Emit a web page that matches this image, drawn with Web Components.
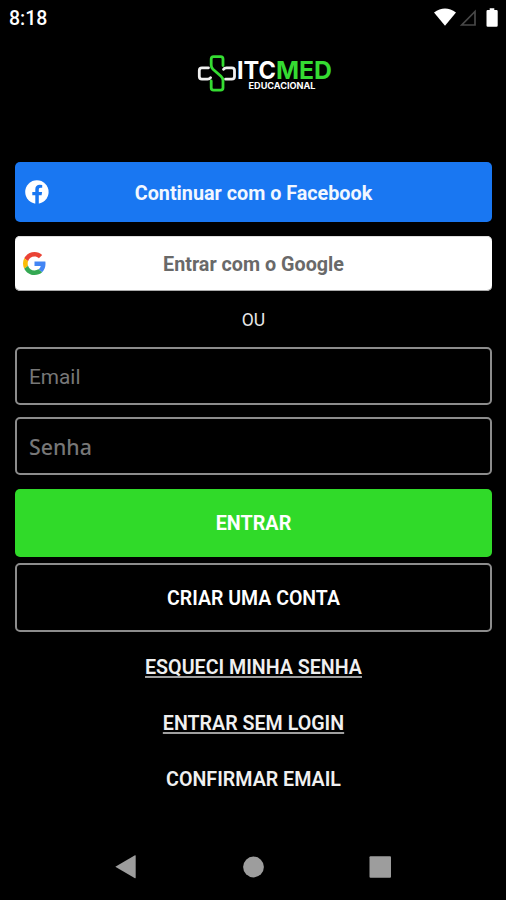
<!DOCTYPE html>
<html lang="pt-BR">
<head>
<meta charset="utf-8">
<title>ITCMED Educacional</title>
<style>
html,body{margin:0;background:#000}
</style>
</head>
<body>
<login-screen></login-screen>
<script>
const define = (name, html) => customElements.define(name, class extends HTMLElement {
  constructor() {
    super();
    this.attachShadow({ mode: 'open' }).innerHTML = html;
  }
});

define('status-bar', `
<style>
:host{display:flex;height:36px;box-sizing:border-box;padding:0 8px 0 9px;align-items:center;justify-content:space-between;color:#fff}
span{font-size:19.5px;font-weight:500;line-height:36px;padding-top:2px}
svg{display:block}
</style>
<span>8:18</span>
<svg width="66" height="24" viewBox="432 6 66 24">
  <path d="M434 12.500Q445 4.500 456 12.500L445 25.700Z" fill="#fff"/>
  <path d="M475 11.500V25H461.800Z" fill="none" stroke="#484848" stroke-width="1.700"/>
  <path d="M489.700 8.300h4.600v1.700h2.200q1.200 0 1.200 1.200v14.300q0 1.300-1.300 1.300h-8.600q-1.300 0-1.300-1.300V11.200q0-1.200 1.200-1.200h2Z" fill="#fff"/>
</svg>`);

define('brand-logo', `
<style>
:host{display:block;height:50px}
svg{display:block;margin:0 auto}
text{font-family:Inter,sans-serif;font-weight:700}
</style>
<svg width="150" height="50" viewBox="190 48 150 50">
  <g fill="none" stroke-width="2.800" stroke-linejoin="round" stroke-linecap="round">
    <path d="M208.500 67.800H202Q199.300 67.800 199.300 70.500V76.500Q199.300 79.200 202 79.200H207.500Q209.800 79.200 210.600 77.700" stroke="#f0f0f0"/>
    <path d="M225.500 79.200H231.800Q234.500 79.200 234.500 76.500V70.500Q234.500 67.800 231.800 67.800H226.500Q224.300 67.800 223.500 69.300" stroke="#f0f0f0"/>
    <path d="M223 65.500V59Q223 56.600 220.600 56.600H213.600Q211.200 56.600 211.200 59V65Q211.200 67.500 213 69.200L221 76.200Q223 78 223 80.500V87.800Q223 90.200 220.600 90.200H213.600Q211.200 90.200 211.200 87.800V81" stroke="#35dc32"/>
  </g>
  <text x="237" y="79.200" font-size="24.500" fill="#fff" textLength="39" lengthAdjust="spacingAndGlyphs">ITC</text>
  <text x="276" y="79.200" font-size="24.500" fill="#35dc32" textLength="56" lengthAdjust="spacingAndGlyphs">MED</text>
  <text x="248.500" y="88.900" font-size="8.600" fill="#fff" textLength="67" lengthAdjust="spacingAndGlyphs">EDUCACIONAL</text>
</svg>`);

define('action-button', `
<style>
:host{display:grid;grid-template-columns:56px 1fr 56px;align-items:center;box-sizing:border-box;border-radius:5px;
  height:60px;text-align:center;font-size:19.750px;font-weight:700;color:#fff}
:host([kind=facebook]){background:#1977f2;color:#f2f7ff}
:host([kind=google]){background:#fff;color:#696969;height:55px;box-shadow:inset 0 -1px #aaa,inset 0 1px #ddd}
:host([kind=primary]){background:#30da29;height:67.500px}
:host([kind=outline]){grid-template-columns:54px 1fr 54px;border:2px solid #8c8c8c;height:68.500px;font-size:19.500px;font-weight:600}
.label{grid-column:2;white-space:nowrap;padding-top:2px}
::slotted(svg){display:block}
</style>
<slot name="icon"></slot><span class="label"><slot></slot></span>`);

define('text-field', `
<style>
:host{display:flex;align-items:center;box-sizing:border-box;height:58px;border:2px solid #8c8c8c;border-radius:5px;padding:2px 0 0 12px;
  font-size:20.800px;color:#777}
</style>
<slot></slot>`);

define('text-link', `
<style>
:host{display:flex;justify-content:center;height:56px;line-height:56px;font-size:19.650px;font-weight:600;color:#f0f0f0}
span{white-space:nowrap}
:host([underlined]) span{text-decoration:underline;text-decoration-color:#a0a0a0;text-decoration-thickness:2px;text-underline-offset:2px;text-decoration-skip-ink:none}
</style>
<span><slot></slot></span>`);

define('nav-bar', `
<style>
:host{display:flex;justify-content:center;height:66px;padding-right:6px}
svg{display:block}
</style>
<svg width="320" height="60" viewBox="90 840 320 60" fill="#9d9d9d">
  <path d="M115.300 866.800L135 855.300Q135.700 855 135.700 856V877.500Q135.700 878.500 135 878.200Z"/>
  <circle cx="253.500" cy="867" r="10.400"/>
  <rect x="369.500" y="856.300" width="21.500" height="21.500" rx="1"/>
</svg>`);

define('login-screen', `
<style>
:host{display:flex;flex-direction:column;width:506px;height:900px;background:#000;overflow:hidden;font-family:Roboto,"Liberation Sans",sans-serif}
brand-logo{margin-top:12px;padding-left:24px}
form{display:flex;flex-direction:column;margin:64px 14px 0 15px}
.or{height:56px;line-height:58px;text-align:center;font-size:17.500px;color:#e8e8e8}
.g{margin-top:14px}
.f2{margin-top:12px}
.e{margin-top:14px}
.c{margin-top:6.500px}
nav{margin-top:8.500px;padding-left:1px}
nav-bar{margin-top:32px}
.senha{font-family:"Noto Sans",sans-serif;font-size:21.300px;font-weight:500;padding-top:0}
</style>
<status-bar></status-bar>
<brand-logo></brand-logo>
<form>
  <action-button kind="facebook">
    <svg slot="icon" width="56" height="60" viewBox="15 162 56 60"><circle cx="36.900" cy="192" r="11.700" fill="#fff"/><path d="M35.300 204V195.300H32.300V191.900H35.300V189.300C35.300 186.200 37.100 184.700 39.700 184.700Q41 184.700 42.200 184.900V187.800H40.700C39.200 187.800 38.800 188.700 38.800 189.700V191.900H42.100L41.600 195.300H38.800V204Z" fill="#1977f2"/></svg>
    Continuar com o Facebook
  </action-button>
  <action-button class="g" kind="google">
    <svg slot="icon" width="23" height="23" viewBox="0 0 48 48" style="margin-left:8px"><path fill="#EA4335" d="M24 9.500c3.540 0 6.710 1.220 9.210 3.600l6.850-6.850C35.900 2.380 30.470 0 24 0 14.620 0 6.510 5.380 2.560 13.220l7.980 6.190C12.430 13.720 17.740 9.500 24 9.500z"/><path fill="#4285F4" d="M46.980 24.550c0-1.570-.15-3.090-.38-4.550H24v9.020h12.940c-.58 2.960-2.260 5.480-4.780 7.180l7.730 6c4.510-4.180 7.090-10.360 7.090-17.650z"/><path fill="#FBBC05" d="M10.530 28.590c-.48-1.450-.76-2.990-.76-4.590s.27-3.140.76-4.590l-7.980-6.190C.92 16.460 0 20.120 0 24c0 3.880.92 7.540 2.560 10.780l7.970-6.190z"/><path fill="#34A853" d="M24 48c6.480 0 11.930-2.130 15.890-5.810l-7.730-6c-2.150 1.450-4.920 2.300-8.160 2.300-6.260 0-11.570-4.220-13.470-9.910l-7.980 6.190C6.510 42.620 14.620 48 24 48z"/></svg>
    Entrar com o Google
  </action-button>
  <div class="or">OU</div>
  <text-field>Email</text-field>
  <text-field class="f2 senha">Senha</text-field>
  <action-button class="e" kind="primary">ENTRAR</action-button>
  <action-button class="c" kind="outline">CRIAR UMA CONTA</action-button>
</form>
<nav>
  <text-link underlined>ESQUECI MINHA SENHA</text-link>
  <text-link underlined>ENTRAR SEM LOGIN</text-link>
  <text-link>CONFIRMAR EMAIL</text-link>
</nav>
<nav-bar></nav-bar>`);
</script>
</body>
</html>
